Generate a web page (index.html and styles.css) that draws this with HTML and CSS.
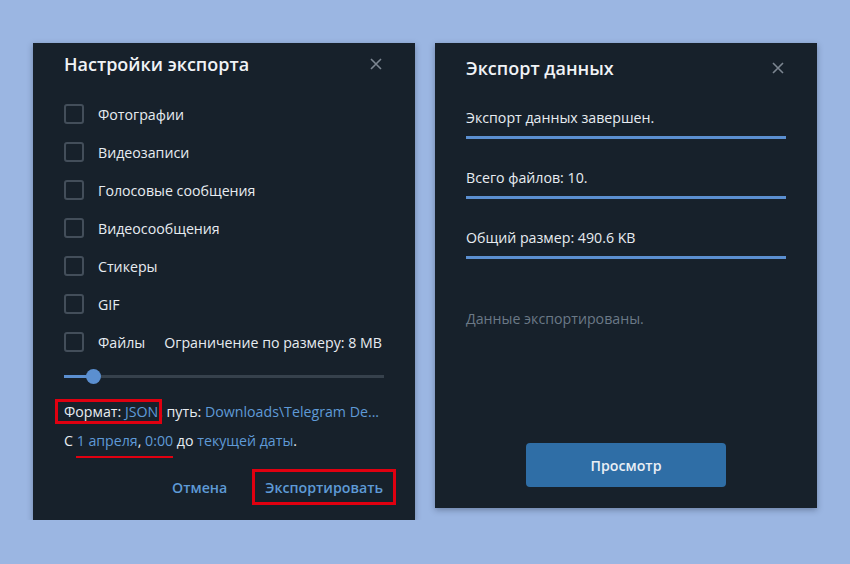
FILE: index.html
```html
<!DOCTYPE html>
<html lang="ru">
<head>
    <meta charset="UTF-8">
    <meta name="viewport" content="width=device-width, initial-scale=1.0">
    <title>Экспорт данных</title>
    <link rel="stylesheet" href="styles.css">
</head>
<body>

    <div class="stage">

        <!-- Настройки экспорта -->
        <div class="panel panel-settings">
            <div class="panel-head">
                <h2>Настройки экспорта</h2>
                <svg class="close" width="12" height="12" viewBox="0 0 12 12"><path d="M1 1L11 11M11 1L1 11" stroke="#7c8691" stroke-width="1.6"/></svg>
            </div>

            <div class="options">
                <label class="option"><span class="box"></span>Фотографии</label>
                <label class="option"><span class="box"></span>Видеозаписи</label>
                <label class="option"><span class="box"></span>Голосовые сообщения</label>
                <label class="option"><span class="box"></span>Видеосообщения</label>
                <label class="option"><span class="box"></span>Стикеры</label>
                <label class="option"><span class="box"></span>GIF</label>
                <label class="option"><span class="box"></span>Файлы<span class="limit">Ограничение по размеру: 8 MB</span></label>
            </div>

            <div class="slider">
                <div class="track"><div class="fill"></div><div class="knob"></div></div>
            </div>

            <p class="line first"><span class="mark">Формат: <a>JSON</a></span>, путь: <a>Downloads\Telegram De...</a></p>
            <p class="line">С <span class="underline"><a>1 апреля</a>, <a>0:00</a></span> до <a>текущей даты</a>.</p>

            <div class="actions">
                <button class="btn-link">Отмена</button>
                <button class="btn-link btn-marked">Экспортировать</button>
            </div>
        </div>

        <!-- Экспорт данных -->
        <div class="panel panel-done">
            <div class="panel-head head-done">
                <h2>Экспорт данных</h2>
                <svg class="close" width="12" height="12" viewBox="0 0 12 12"><path d="M1 1L11 11M11 1L1 11" stroke="#7c8691" stroke-width="1.6"/></svg>
            </div>

            <div class="stat first">Экспорт данных завершен.</div>
            <div class="stat">Всего файлов: 10.</div>
            <div class="stat">Общий размер: 490.6 KB</div>

            <p class="hint">Данные экспортированы.</p>

            <div class="center">
                <button class="btn-main">Просмотр</button>
            </div>
        </div>

    </div>

</body>
</html>
```

FILE: styles.css
```css
body {
    margin: 0;
    background: #9bb6e2;
    font-family: "Open Sans", "Noto Sans", sans-serif;
    color: #e7ecf1;
}
.stage {
    display: flex;
    align-items: flex-start;
    gap: 20px;
    padding: 43px 0 0 33px;
}
.panel {
    width: 382px;
    box-sizing: border-box;
    background: #17212b;
    box-shadow: 0 2px 6px rgba(20, 30, 50, 0.35);
}
.panel-settings {
    height: 477px;
    padding: 0 31px;
}
.panel-done {
    height: 465px;
    padding: 0 31px;
}
.panel-head {
    height: 42px;
    display: flex;
    align-items: center;
    justify-content: space-between;
}
.head-done {
    height: 50px;
}
.panel-head h2 {
    margin: 0;
    font-size: 18px;
    font-weight: 600;
    color: #f0f3f6;
}
.close {
    margin-right: 2px;
}
.options {
    margin-top: 10px;
}
.option {
    display: flex;
    align-items: center;
    height: 38px;
    font-size: 14.2px;
}
.box {
    width: 16px;
    height: 16px;
    border: 2px solid #434e5a;
    border-radius: 3px;
    margin-right: 14px;
}
.limit {
    margin-left: 19px;
}
.slider {
    height: 30px;
    display: flex;
    align-items: center;
}
.track {
    position: relative;
    width: 100%;
    height: 3px;
    background: #36414c;
}
.fill {
    width: 29px;
    height: 3px;
    background: #5b8fd0;
}
.knob {
    position: absolute;
    left: 22px;
    top: -6px;
    width: 15px;
    height: 15px;
    border-radius: 50%;
    background: #5b8fd0;
}
.line {
    margin: 0;
    height: 29px;
    line-height: 29px;
    font-size: 14.2px;
    white-space: nowrap;
}
.line.first {
    margin-top: 6px;
}
a {
    color: #5f9ad7;
}
.mark {
    outline: 3px solid #e00010;
    outline-offset: 0;
    padding: 0 1px 0 6px;
    margin-left: -6px;
}
.underline {
    border-bottom: 2px solid #e00010;
    padding: 0 0 6px 1px;
    margin-left: -1px;
}
.actions {
    display: flex;
    justify-content: flex-end;
    gap: 12px;
    margin: 14px -12px 0 0;
}
.btn-link {
    height: 36px;
    padding: 0 13px;
    background: none;
    border: none;
    font-family: inherit;
    font-size: 14.2px;
    font-weight: 600;
    color: #5e9ad6;
}
.btn-marked {
    outline: 3px solid #e00010;
    outline-offset: -3px;
}
.stat {
    padding-bottom: 8px;
    border-bottom: 3px solid #5b8fd0;
    margin-top: 29px;
    line-height: 20px;
    font-size: 14.2px;
    font-weight: 500;
}
.stat.first {
    margin-top: 15px;
}
.hint {
    margin: 50px 0 0;
    line-height: 20px;
    font-size: 14.2px;
    color: #6b7987;
}
.center {
    display: flex;
    justify-content: center;
    margin-top: 114px;
}
.btn-main {
    width: 200px;
    height: 44px;
    border: none;
    border-radius: 4px;
    background: #2f6ea6;
    color: #e9eff5;
    font-family: inherit;
    font-size: 14.2px;
    font-weight: 600;
}
```
